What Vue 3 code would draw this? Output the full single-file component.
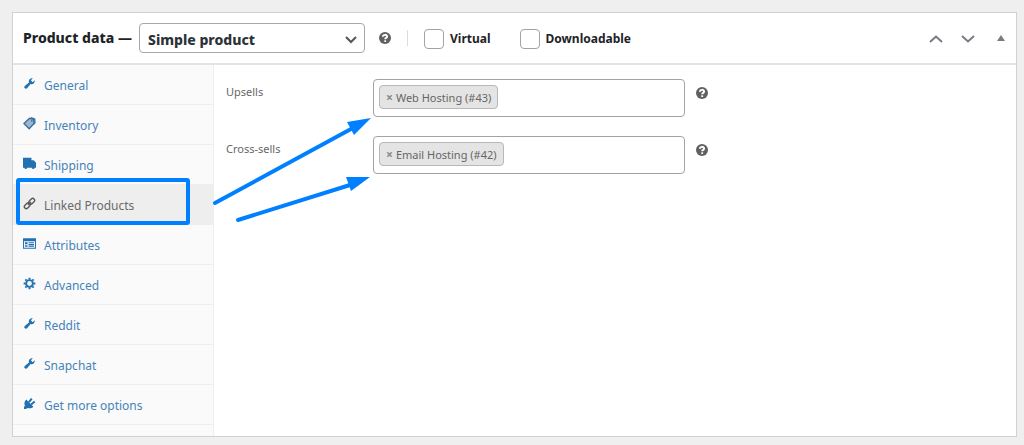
<script setup>
import { ref } from 'vue'

const productType = ref('simple')
const virtual = ref(false)
const downloadable = ref(false)

const tabs = [
  { label: 'General', icon: 'wrench' },
  { label: 'Inventory', icon: 'tag' },
  { label: 'Shipping', icon: 'truck' },
  { label: 'Linked Products', icon: 'link', active: true },
  { label: 'Attributes', icon: 'list' },
  { label: 'Advanced', icon: 'gear' },
  { label: 'Reddit', icon: 'wrench' },
  { label: 'Snapchat', icon: 'wrench' },
  { label: 'Get more options', icon: 'plug' },
]

const fields = [
  { id: 'upsells', label: 'Upsells', item: 'Web Hosting (#43)' },
  { id: 'crosssells', label: 'Cross-sells', item: 'Email Hosting (#42)' },
]
</script>

<template>
  <main class="page">
    <section class="panel">
      <header class="head">
        <h2 class="title"><label for="product-type">Product data —</label></h2>
        <div class="select">
          <select id="product-type" v-model="productType">
            <option value="simple">Simple product</option>
          </select>
          <svg class="caret" viewBox="0 0 12 8" aria-hidden="true"><path d="M1 1l5 5 5-5" /></svg>
        </div>
        <button class="help" type="button" aria-label="Help">
          <svg viewBox="0 0 12 12"><circle cx="6" cy="6" r="6" /><path d="M4 4.700C4 2.300 8.100 2.300 8.100 4.500C8.100 6 6.200 5.800 6.200 7.300" /><rect x="5.300" y="8.300" width="1.800" height="1.700" /></svg>
        </button>
        <span class="divider"></span>
        <label class="check"><input v-model="virtual" type="checkbox" />Virtual</label>
        <label class="check second"><input v-model="downloadable" type="checkbox" />Downloadable</label>
        <div class="handles">
          <button type="button" aria-label="Move up"><svg class="arrow" viewBox="0 0 14 8"><path d="M1 7l6-5.500 6 5.500" /></svg></button>
          <button type="button" aria-label="Move down"><svg class="arrow" viewBox="0 0 14 8"><path d="M1 1l6 5.500 6-5.500" /></svg></button>
          <button class="toggle" type="button" aria-label="Toggle panel"><svg viewBox="0 0 8 6"><path d="M4 0l4 6H0z" /></svg></button>
        </div>
      </header>

      <div class="body">
        <nav class="tabs">
          <a v-for="tab in tabs" :key="tab.label" href="#" class="tab" :class="{ active: tab.active }">
            <svg class="icon" viewBox="0 0 20 20" aria-hidden="true">
              <path v-if="tab.icon === 'wrench'" d="M16.680 9.770c-1.340 1.340-3.300 1.670-4.950.99l-5.410 6.520c-.99.99-2.590.99-3.580 0s-.99-2.590 0-3.570l6.520-5.420c-.68-1.650-.35-3.610.99-4.950 1.280-1.280 3.120-1.620 4.720-1.060l-2.890 2.890 2.820 2.820 2.860-2.870c.53 1.580.18 3.390-1.080 4.650z" />
              <g v-else-if="tab.icon === 'tag'">
                <path class="line soft" d="M1.500 10L10 2l6 1.500 1 6.500-7.500 8z" />
                <path class="line" d="M12 1l6 2 .5 6-2 2" />
                <circle cx="13.500" cy="6" r="1.200" />
              </g>
              <path v-else-if="tab.icon === 'truck'" d="M0 1h13v4h3.500L20 9v7.500h-2a2.300 2.300 0 0 1-4.500 0H6.500a2.300 2.300 0 0 1-4.500 0H0z" />
              <g v-else-if="tab.icon === 'link'" class="chain">
                <rect x="8.500" y="3.500" width="10" height="6" rx="3" transform="rotate(-45 13.500 6.500)" />
                <rect x="1.500" y="10.500" width="10" height="6" rx="3" transform="rotate(-45 6.500 13.500)" />
                <path d="M7.500 12.500l5-5" />
              </g>
              <path v-else-if="tab.icon === 'list'" fill-rule="evenodd" d="M0 2h20v16H0zM1.500 6.500v10h17v-10zM3 8h4v3H3zM8.500 8H17v1.700H8.500zM8.500 10.900H17v1.700H8.500zM3 12.500h4V15H3zM8.500 13.600H17v1.500H8.500z" />
              <g v-else-if="tab.icon === 'gear'" class="gear">
                <circle cx="10" cy="10" r="5.200" />
                <path d="M10 1v3M10 16v3M1 10h3M16 10h3M3.600 3.600l2 2M14.400 14.400l2 2M3.600 16.400l2-2M14.400 5.600l2-2" />
              </g>
              <g v-else>
                <path d="M5 4l11 11c-2.500 2.500-6 3-9 2L4.500 18.500H1.500v-3L3 13.500C1.500 10.500 2 7 5 4z" />
                <path class="prong" d="M9 8l4.500-5.500M12.500 11.500L18 7" />
              </g>
            </svg>
            <span>{{ tab.label }}</span>
          </a>
        </nav>

        <div class="fields">
          <div v-for="field in fields" :key="field.id" class="field">
            <label :for="field.id">{{ field.label }}</label>
            <div class="tokens">
              <span class="token"><button type="button" :aria-label="'Remove ' + field.item">×</button>{{ field.item }}</span>
              <input :id="field.id" type="text" />
            </div>
            <button class="help" type="button" aria-label="Help">
              <svg viewBox="0 0 12 12"><circle cx="6" cy="6" r="6" /><path d="M4 4.700C4 2.300 8.100 2.300 8.100 4.500C8.100 6 6.200 5.800 6.200 7.300" /><rect x="5.300" y="8.300" width="1.800" height="1.700" /></svg>
            </button>
          </div>
        </div>

        <svg class="pointers" viewBox="0 0 160 110" aria-hidden="true">
          <path class="shaft" d="M3 88L139 14M26 105L138 70" />
          <path d="M159 3L135 7L142 20z" />
          <path d="M158 62L134 62L139 76z" />
        </svg>
      </div>
    </section>
  </main>
</template>

<style>
body {
  margin: 0;
  background: #efefef;
}
</style>

<style scoped>
* {
  box-sizing: border-box;
}
.page {
  padding: 12px 7px 8px 12px;
  font-family: "Noto Sans", "Open Sans", sans-serif;
  font-size: 12px;
  color: #666;
}
.panel {
  background: #fff;
  border: 1px solid #d0d1d3;
}
button {
  padding: 0;
  border: 0;
  background: none;
  font: inherit;
  color: inherit;
}
svg {
  display: block;
}
.head {
  display: flex;
  align-items: center;
  height: 52px;
  padding: 0 11px 0 10px;
  border-bottom: 2px solid #e2e3e4;
  color: #1d2327;
  font-weight: 700;
}
.title {
  width: 116px;
  margin: 0;
  font-size: 14px;
  font-weight: 800;
  line-height: 20px;
  white-space: nowrap;
}
.select {
  position: relative;
  width: 226px;
}
.select select {
  appearance: none;
  width: 100%;
  height: 30px;
  padding: 2px 8px 0;
  border: 1px solid #a5a7aa;
  border-radius: 4px;
  background: #fff;
  color: #2c3338;
  font: inherit;
  font-size: 14px;
  font-weight: 800;
}
.caret {
  position: absolute;
  right: 8px;
  top: 13px;
  width: 12px;
  height: 8px;
  fill: none;
  stroke: #50575e;
  stroke-width: 2;
}
.help {
  width: 12px;
  height: 12px;
  margin-left: 14px;
  flex: none;
}
.help svg {
  width: 12px;
  height: 12px;
  fill: #606060;
}
.help path {
  fill: none;
  stroke: #fff;
  stroke-width: 2;
}
.help rect {
  fill: #fff;
}
.divider {
  width: 1px;
  height: 16px;
  margin: 0 16px;
  background: #dcdcde;
}
.check {
  display: flex;
  align-items: center;
  gap: 6px;
  margin-top: 1px;
}
.check.second {
  margin-left: 29px;
}
.check input {
  appearance: none;
  width: 20px;
  height: 20px;
  margin: 0;
  border: 1px solid #a0a3a7;
  border-radius: 4px;
  background: #fff;
}
.handles {
  display: flex;
  align-items: center;
  gap: 18px;
  margin-left: auto;
}
.arrow {
  width: 14px;
  height: 8px;
  margin-top: 2px;
  fill: none;
  stroke: #787c82;
  stroke-width: 2;
}
.toggle svg {
  width: 8px;
  height: 6px;
  fill: #787c82;
}
.toggle {
  margin-left: 4px;
}
.body {
  position: relative;
  display: flex;
}
.tabs {
  width: 201px;
  flex: none;
  padding-bottom: 11px;
  border-right: 1px solid #eee;
  background: #fafafa;
}
.tab {
  position: relative;
  display: flex;
  align-items: center;
  gap: 8px;
  height: 40px;
  padding: 2px 0 0 10px;
  border-bottom: 1px solid #eee;
  color: #4583b9;
  text-decoration: none;
}
.tab.active {
  background: #eee;
  color: #6a6a6a;
}
.tab.active::after {
  content: "";
  position: absolute;
  left: 3px;
  right: 23px;
  top: -7px;
  bottom: -1px;
  border: 4px solid #0080ff;
  border-radius: 3px;
}
.icon {
  width: 13px;
  height: 13px;
  margin-bottom: 5px;
  fill: #2271b1;
}
.active .icon {
  fill: #555;
}
.line {
  fill: none;
  stroke: #356f9f;
  stroke-width: 2;
}
.soft {
  fill: #9fb5cd;
}
.chain {
  fill: none;
  stroke: #555;
  stroke-width: 2;
}
.gear {
  fill: none;
  stroke: #2271b1;
  stroke-width: 3;
}
.prong {
  fill: none;
  stroke: #2271b1;
  stroke-width: 3;
}
.fields {
  flex: 1;
  padding: 14px 12px;
  font-size: 11px;
}
.field {
  display: flex;
  align-items: flex-start;
  margin-bottom: 19px;
}
.field > label {
  width: 147px;
  line-height: 26px;
}
.field .help {
  margin: 8px 0 0 11px;
}
.tokens {
  display: flex;
  width: 312px;
  height: 38px;
  padding: 5px;
  border: 1px solid #a0a3aa;
  border-radius: 4px;
  background: #fff;
}
.tokens input {
  flex: 1;
  min-width: 0;
  border: 0;
  outline: 0;
  background: none;
  font: inherit;
}
.token {
  display: flex;
  align-items: center;
  gap: 3px;
  height: 24px;
  padding: 0 6px;
  border: 1px solid #b8b8b8;
  border-radius: 4px;
  background: #e4e4e4;
  white-space: nowrap;
}
.token button {
  color: #888;
  font-size: 12px;
  font-weight: 700;
}
.pointers {
  position: absolute;
  left: 199px;
  top: 50px;
  width: 160px;
  height: 110px;
  fill: #0080ff;
  pointer-events: none;
}
.shaft {
  stroke: #0080ff;
  stroke-width: 4;
  stroke-linecap: round;
}
</style>
